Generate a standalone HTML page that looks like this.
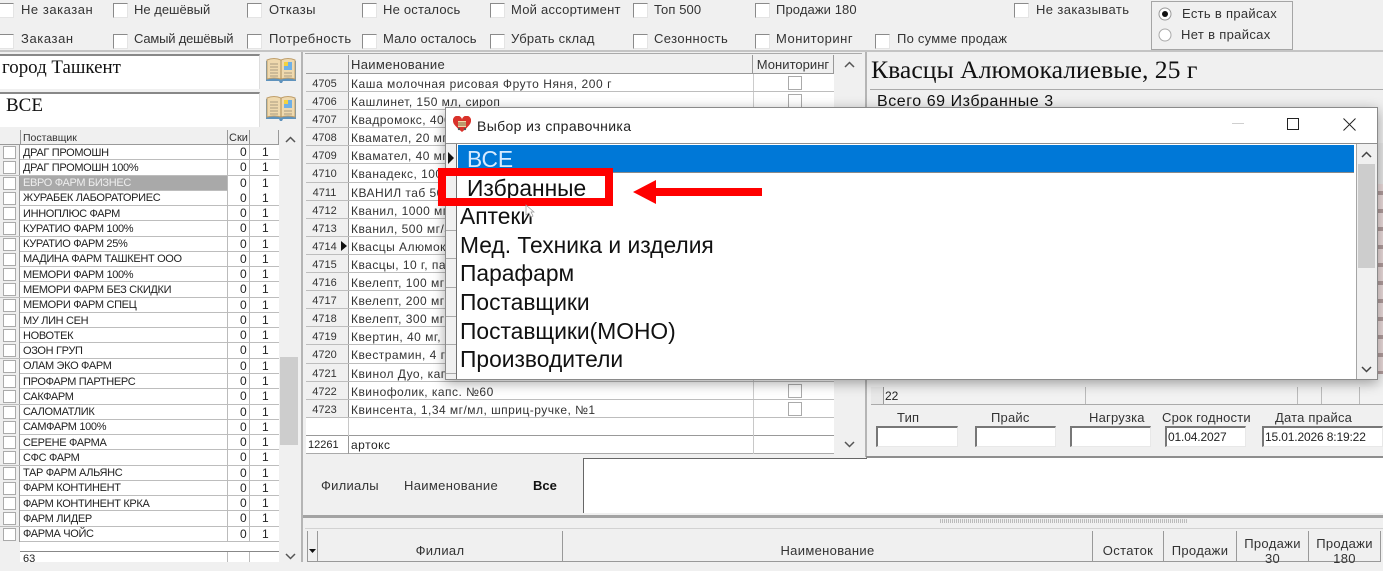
<!DOCTYPE html>
<html lang="ru"><head><meta charset="utf-8"><title>Выбор из справочника</title>
<style>
html,body{margin:0;padding:0;background:#f0f0f0}
body{position:relative;width:1383px;height:562px;overflow:hidden;font:12px "Liberation Sans",sans-serif;color:#222;filter:blur(.3px)}
.a{position:absolute;white-space:nowrap}
.cb{position:absolute;width:13px;height:13px;background:#fff;border:1px solid #8a8a8a;border-right-color:#e4e4e4;border-bottom-color:#e4e4e4;box-sizing:content-box}
.t{position:absolute;white-space:nowrap;line-height:14px;font-size:13px;color:#333}
.l{position:absolute;left:0;top:145px;width:279px}
.l div{height:15.28px;position:relative;box-sizing:border-box;border-bottom:1px solid #bdbdbd;background:#fff;line-height:15px;font-size:11px;letter-spacing:-.33px}
.l div.s{background:#a9a9a9;color:#eee}
.l i{position:absolute;left:0;top:0;width:20px;height:15px;background:#eee;border-right:1px solid #999;box-sizing:border-box}
.l i:after{content:"";position:absolute;left:3px;top:1px;width:11px;height:11px;background:#fff;border:1px solid #aaa}
.l b{font-weight:400;position:absolute;left:23px;top:.6px}
.l u,.l s{text-decoration:none;position:absolute;top:0;font-size:12px;letter-spacing:0}
.l u{left:240px}.l s{left:262px}
.l em{position:absolute;top:0;left:227px;width:1px;height:15px;background:#bbb}
.l em+em{left:249px}
.m{position:absolute;left:306px;top:74px;width:528px}
.m div{height:18.1px;position:relative;box-sizing:border-box;border-bottom:1px solid #bdbdbd;background:#fff;line-height:20px;letter-spacing:.47px;padding-left:45px;white-space:nowrap;overflow:hidden;color:#333}
.m i{position:absolute;left:0;top:0;width:43px;height:18px;background:#f0f0f0;border-right:1px solid #999;font-style:normal;font-size:11px;text-align:center;padding-right:5px;box-sizing:border-box;letter-spacing:0}
.m u{position:absolute;left:447px;top:0;width:1px;height:18px;background:#ccc}
.m div:after{content:"";position:absolute;left:482px;top:2px;width:12px;height:12px;border:1px solid #aaa;background:#fff}
.hd{position:absolute;background:#f0f0f0;color:#333;box-sizing:border-box;border-right:1px solid #999;border-bottom:1px solid #999;text-align:center;white-space:nowrap;font-size:13px;letter-spacing:.33px}
.fld{position:absolute;top:426px;height:21px;background:#fff;box-sizing:border-box;border:1px solid #e8e8e8;border-left:2px solid #777;border-top:2px solid #777;font-size:12px;line-height:18px;padding-left:1px;white-space:nowrap;letter-spacing:-.15px}
.lb{position:absolute;top:410px;line-height:15px;letter-spacing:.2px;font-size:13px;color:#333;white-space:nowrap}
.d{position:absolute;left:445px;top:107px;width:933px;height:273px;background:#fff;border:1px solid #8a8a8a;box-sizing:border-box;box-shadow:0 3px 12px rgba(0,0,0,.35)}
.dr{position:absolute;white-space:nowrap;font-size:22.8px;line-height:28px;color:#111;left:460px}
.dl{position:absolute;left:446px;width:10px;height:1px;background:#aaa}
</style></head><body>

<!-- top filter bar -->
<div class="cb" style="left:-1px;top:3px"></div><div class="t" style="left:21px;top:3px;letter-spacing:.54px">Не заказан</div>
<div class="cb" style="left:113px;top:3px"></div><div class="t" style="left:134px;top:3px">Не дешёвый</div>
<div class="cb" style="left:247px;top:3px"></div><div class="t" style="left:269px;top:3px;letter-spacing:.4px">Отказы</div>
<div class="cb" style="left:362px;top:3px"></div><div class="t" style="left:383px;top:3px;letter-spacing:.2px">Не осталось</div>
<div class="cb" style="left:490px;top:3px"></div><div class="t" style="left:511px;top:3px;letter-spacing:.24px">Мой ассортимент</div>
<div class="cb" style="left:633px;top:3px"></div><div class="t" style="left:654px;top:3px;letter-spacing:.1px">Топ 500</div>
<div class="cb" style="left:755px;top:3px"></div><div class="t" style="left:776px;top:3px;letter-spacing:.1px">Продажи 180</div>
<div class="cb" style="left:1014px;top:3px"></div><div class="t" style="left:1036px;top:3px;letter-spacing:.4px">Не заказывать</div>

<div class="cb" style="left:-1px;top:34px"></div><div class="t" style="left:21px;top:32px;letter-spacing:.6px">Заказан</div>
<div class="cb" style="left:113px;top:34px"></div><div class="t" style="left:134px;top:32px;letter-spacing:-.2px">Самый дешёвый</div>
<div class="cb" style="left:247px;top:34px"></div><div class="t" style="left:269px;top:32px;letter-spacing:.45px">Потребность</div>
<div class="cb" style="left:362px;top:34px"></div><div class="t" style="left:383px;top:32px;letter-spacing:.15px">Мало осталось</div>
<div class="cb" style="left:490px;top:34px"></div><div class="t" style="left:511px;top:32px;letter-spacing:.25px">Убрать склад</div>
<div class="cb" style="left:633px;top:34px"></div><div class="t" style="left:654px;top:32px;letter-spacing:.4px">Сезонность</div>
<div class="cb" style="left:755px;top:34px"></div><div class="t" style="left:776px;top:32px;letter-spacing:.5px">Мониторинг</div>
<div class="cb" style="left:875px;top:34px"></div><div class="t" style="left:897px;top:32px;letter-spacing:.25px">По сумме продаж</div>

<div class="a" style="left:1151px;top:1px;width:142px;height:49px;box-sizing:border-box;border:1px solid #a5a5a5"></div>
<svg class="a" style="left:1158px;top:7px" width="15" height="36"><circle cx="7" cy="7" r="6" fill="#fff" stroke="#999"/><circle cx="7" cy="7" r="3" fill="#111"/><circle cx="7" cy="28" r="6" fill="#fff" stroke="#aaa"/></svg>
<div class="t" style="left:1182px;top:7px;letter-spacing:.3px">Есть в прайсах</div>
<div class="t" style="left:1181px;top:28px;letter-spacing:.33px">Нет в прайсах</div>
<div class="a" style="left:0;top:50px;width:1383px;height:2px;background:#c4c4c4"></div>

<!-- left column -->
<div class="a" style="left:0;top:54px;width:260px;height:35px;background:#fff;border-top:2px solid #888;border-right:1px solid #ddd;box-sizing:border-box;font:18.9px/23px 'Liberation Serif',serif;color:#111;padding-left:2px">город Ташкент</div>
<div class="a" style="left:0;top:92px;width:260px;height:35px;background:#fff;border-top:2px solid #888;border-right:1px solid #ddd;box-sizing:border-box;font:19px/24px 'Liberation Serif',serif;color:#111;padding-left:6px">ВСЕ</div>
<svg class="a" style="left:265px;top:57px" width="32" height="27" viewBox="0 0 32 27"><path d="M1 4q8-3 15 0 7-3 15 0v20H18l-1 2h-2l-1-2H1z" fill="#5f93bd"/><path d="M2 3q7-3 14 0 7-3 14 0v19q-7-2-14 0-7-2-14 0z" fill="#efd9ae" stroke="#c09f6b"/><path d="M16 3v19" stroke="#a88a57"/><path d="M5 7h8M5 10h8M5 13h8M5 16h8M5 19h8M19 16h8M19 19h8" stroke="#a89a80"/><rect x="19" y="5" width="8" height="8" fill="#6fb0e6"/><rect x="19" y="5" width="4" height="4" fill="#f2d23f"/></svg>
<svg class="a" style="left:265px;top:95px" width="32" height="27" viewBox="0 0 32 27"><path d="M1 4q8-3 15 0 7-3 15 0v20H18l-1 2h-2l-1-2H1z" fill="#5f93bd"/><path d="M2 3q7-3 14 0 7-3 14 0v19q-7-2-14 0-7-2-14 0z" fill="#efd9ae" stroke="#c09f6b"/><path d="M16 3v19" stroke="#a88a57"/><path d="M5 7h8M5 10h8M5 13h8M5 16h8M5 19h8M19 16h8M19 19h8" stroke="#a89a80"/><rect x="19" y="5" width="8" height="8" fill="#6fb0e6"/><rect x="19" y="5" width="4" height="4" fill="#f2d23f"/></svg>

<div class="hd" style="left:0;top:130px;width:21px;height:15px"></div>
<div class="hd" style="left:21px;top:130px;width:207px;height:15px;text-align:left;padding-left:2px;font-size:10.5px;line-height:16px;letter-spacing:0">Поставщик</div>
<div class="hd" style="left:228px;top:130px;width:22px;height:15px;font-size:11px;line-height:16px;letter-spacing:0">Ски</div>
<div class="hd" style="left:250px;top:130px;width:29px;height:15px"></div>

<div class="l">
<div><i></i><b>ДРАГ ПРОМОШН</b><em></em><em></em><u>0</u><s>1</s></div>
<div><i></i><b>ДРАГ ПРОМОШН 100%</b><em></em><em></em><u>0</u><s>1</s></div>
<div class="s"><i></i><b>ЕВРО ФАРМ БИЗНЕС</b><em></em><em></em><u style="background:#fff;color:#222;left:228px;width:21px;padding-left:12px;box-sizing:border-box">0</u><s style="background:#fff;color:#222;left:250px;width:29px;padding-left:12px;box-sizing:border-box">1</s></div>
<div><i></i><b>ЖУРАБЕК ЛАБОРАТОРИЕС</b><em></em><em></em><u>0</u><s>1</s></div>
<div><i></i><b>ИННОПЛЮС ФАРМ</b><em></em><em></em><u>0</u><s>1</s></div>
<div><i></i><b>КУРАТИО ФАРМ 100%</b><em></em><em></em><u>0</u><s>1</s></div>
<div><i></i><b>КУРАТИО ФАРМ 25%</b><em></em><em></em><u>0</u><s>1</s></div>
<div><i></i><b>МАДИНА ФАРМ ТАШКЕНТ ООО</b><em></em><em></em><u>0</u><s>1</s></div>
<div><i></i><b>МЕМОРИ ФАРМ 100%</b><em></em><em></em><u>0</u><s>1</s></div>
<div><i></i><b>МЕМОРИ ФАРМ БЕЗ СКИДКИ</b><em></em><em></em><u>0</u><s>1</s></div>
<div><i></i><b>МЕМОРИ ФАРМ СПЕЦ</b><em></em><em></em><u>0</u><s>1</s></div>
<div><i></i><b>МУ ЛИН СЕН</b><em></em><em></em><u>0</u><s>1</s></div>
<div><i></i><b>НОВОТЕК</b><em></em><em></em><u>0</u><s>1</s></div>
<div><i></i><b>ОЗОН ГРУП</b><em></em><em></em><u>0</u><s>1</s></div>
<div><i></i><b>ОЛАМ ЭКО ФАРМ</b><em></em><em></em><u>0</u><s>1</s></div>
<div><i></i><b>ПРОФАРМ ПАРТНЕРС</b><em></em><em></em><u>0</u><s>1</s></div>
<div><i></i><b>САКФАРМ</b><em></em><em></em><u>0</u><s>1</s></div>
<div><i></i><b>САЛОМАТЛИК</b><em></em><em></em><u>0</u><s>1</s></div>
<div><i></i><b>САМФАРМ 100%</b><em></em><em></em><u>0</u><s>1</s></div>
<div><i></i><b>СЕРЕНЕ ФАРМА</b><em></em><em></em><u>0</u><s>1</s></div>
<div><i></i><b>СФС ФАРМ</b><em></em><em></em><u>0</u><s>1</s></div>
<div><i></i><b>ТАР ФАРМ АЛЬЯНС</b><em></em><em></em><u>0</u><s>1</s></div>
<div><i></i><b>ФАРМ КОНТИНЕНТ</b><em></em><em></em><u>0</u><s>1</s></div>
<div><i></i><b>ФАРМ КОНТИНЕНТ КРКА</b><em></em><em></em><u>0</u><s>1</s></div>
<div><i></i><b>ФАРМ ЛИДЕР</b><em></em><em></em><u>0</u><s>1</s></div>
<div><i></i><b>ФАРМА ЧОЙС</b><em></em><em></em><u>0</u><s>1</s></div>
</div>
<div class="a" style="left:20px;top:542px;width:259px;height:9px;background:#fff;border-bottom:1px solid #888"></div>
<div class="a" style="left:0;top:552px;width:279px;height:10px;background:#fff"></div>
<div class="a" style="left:0;top:552px;width:20px;height:10px;background:#f0f0f0"></div>
<div class="a" style="left:23px;top:553px;font-size:11px;line-height:13px">63</div>
<div class="a" style="left:227px;top:552px;width:1px;height:10px;background:#bbb"></div>
<div class="a" style="left:249px;top:552px;width:1px;height:10px;background:#bbb"></div>
<div class="a" style="left:280px;top:130px;width:18px;height:432px;background:#f0f0f0"></div>
<div class="a" style="left:280px;top:357px;width:18px;height:88px;background:#cdcdcd"></div>
<svg class="a" style="left:285px;top:136px" width="11" height="7"><path d="M1 6l4.500-4.500L10 6" fill="none" stroke="#555" stroke-width="1.500"/></svg>
<svg class="a" style="left:285px;top:553px" width="11" height="7"><path d="M1 1l4.500 4.500L10 1" fill="none" stroke="#555" stroke-width="1.500"/></svg>
<div class="a" style="left:301px;top:52px;width:2px;height:510px;background:#b5b5b5"></div>

<!-- middle grid -->
<div class="a" style="left:305px;top:53px;width:557px;height:1px;background:#aaa"></div>
<div class="hd" style="left:306px;top:55px;width:43px;height:19px"></div>
<div class="hd" style="left:349px;top:55px;width:404px;height:19px;text-align:left;padding-left:2px;line-height:19px">Наименование</div>
<div class="hd" style="left:753px;top:55px;width:81px;height:19px;line-height:19px;letter-spacing:.03px">Мониторинг</div>
<div class="m">
<div style="letter-spacing:.55px"><i>4705</i>Каша молочная рисовая Фруто Няня, 200 г<u></u></div>
<div><i>4706</i>Кашлинет, 150 мл, сироп<u></u></div>
<div><i>4707</i>Квадромокс, 400 мг<u></u></div>
<div><i>4708</i>Квамател, 20 мг<u></u></div>
<div><i>4709</i>Квамател, 40 мг<u></u></div>
<div><i>4710</i>Кванадекс, 100 мг<u></u></div>
<div><i>4711</i>КВАНИЛ таб 500 мг<u></u></div>
<div><i>4712</i>Кванил, 1000 мг<u></u></div>
<div><i>4713</i>Кванил, 500 мг/5 мл<u></u></div>
<div><i>4714</i>Квасцы Алюмокалиевые<u></u></div>
<div><i>4715</i>Квасцы, 10 г, пакет<u></u></div>
<div><i>4716</i>Квелепт, 100 мг<u></u></div>
<div><i>4717</i>Квелепт, 200 мг<u></u></div>
<div><i>4718</i>Квелепт, 300 мг<u></u></div>
<div><i>4719</i>Квертин, 40 мг, таб<u></u></div>
<div><i>4720</i>Квестрамин, 4 г<u></u></div>
<div><i>4721</i>Квинол Дуо, капс<u></u></div>
<div><i>4722</i>Квинофолик, капс. №60<u></u></div>
<div><i>4723</i>Квинсента, 1,34 мг/мл, шприц-ручке, №1<u></u></div>
</div>
<svg class="a" style="left:340px;top:240px" width="8" height="12"><path d="M1 1l6 5-6 5z" fill="#111"/></svg>
<div class="a" style="left:306px;top:418px;width:528px;height:18px;background:#fff;border-bottom:1px solid #999;box-sizing:border-box"></div>
<div class="a" style="left:348px;top:418px;width:1px;height:36px;background:#c8c8c8"></div>
<div class="a" style="left:753px;top:418px;width:1px;height:36px;background:#c8c8c8"></div>
<div class="a" style="left:306px;top:436px;width:528px;height:18px;background:#fff;border-bottom:1px solid #aaa;box-sizing:border-box"></div>
<div class="a" style="left:308px;top:437px;font-size:11px;line-height:16px">12261</div>
<div class="a" style="left:348px;top:436px;width:1px;height:18px;background:#999"></div>
<div class="a" style="left:753px;top:436px;width:1px;height:18px;background:#c8c8c8"></div>
<div class="a" style="left:351px;top:437px;line-height:16px;letter-spacing:.5px">артокс</div>
<svg class="a" style="left:844px;top:441px" width="11" height="7"><path d="M1 1l4.500 4.500L10 1" fill="none" stroke="#555" stroke-width="1.500"/></svg>
<svg class="a" style="left:844px;top:61px" width="11" height="7"><path d="M1 6l4.500-4.500L10 6" fill="none" stroke="#555" stroke-width="1.500"/></svg>
<div class="a" style="left:865px;top:52px;width:2px;height:405px;background:#b5b5b5"></div>

<!-- filial search -->
<div class="t" style="left:321px;top:479px;letter-spacing:.25px">Филиалы</div>
<div class="t" style="left:404px;top:479px;letter-spacing:.33px">Наименование</div>
<div class="t" style="left:533px;top:479px;font-weight:700;color:#111">Все</div>
<div class="a" style="left:583px;top:458px;width:800px;height:55px;background:#fff;border-left:1px solid #666;border-top:1px solid #666;box-sizing:border-box"></div>
<div class="a" style="left:303px;top:515px;width:1080px;height:3px;background:#a3a3a3"></div>
<div class="a" style="left:940px;top:519px;width:247px;height:4px;background:repeating-linear-gradient(90deg,#bbb 0 1px,transparent 1px 2px)"></div>
<div class="a" style="left:305px;top:528px;width:1078px;height:1px;background:#d2d2d2"></div>
<div class="hd" style="left:307px;top:531px;width:11px;height:31px;border-left:1px solid #999"></div>
<svg class="a" style="left:309px;top:549px" width="8" height="5"><path d="M0 0h7L3.500 4z" fill="#111"/></svg>
<div class="hd" style="left:318px;top:531px;width:245px;height:31px;line-height:40px">Филиал</div>
<div class="hd" style="left:563px;top:531px;width:530px;height:31px;line-height:40px">Наименование</div>
<div class="hd" style="left:1093px;top:531px;width:71px;height:31px;line-height:40px">Остаток</div>
<div class="hd" style="left:1164px;top:531px;width:73px;height:31px;line-height:40px">Продажи</div>
<div class="hd" style="left:1237px;top:531px;width:72px;height:31px;line-height:15px;padding-top:5px">Продажи<br>30</div>
<div class="hd" style="left:1309px;top:531px;width:72px;height:31px;line-height:15px;padding-top:5px">Продажи<br>180</div>

<!-- right panel -->
<div class="a" style="left:871px;top:55px;font:25.7px/30px 'Liberation Serif',serif;color:#111">Квасцы Алюмокалиевые, 25 г</div>
<div class="a" style="left:870px;top:89px;width:513px;height:1px;background:#aaa"></div>
<div class="a" style="left:877px;top:93px;font-size:16px;line-height:18px;color:#111;letter-spacing:.55px">Всего 69 Избранные 3</div>
<div class="a" style="left:871px;top:387px;width:512px;height:18px;background:#f2f2f2;border-bottom:1px solid #aaa;box-sizing:border-box"></div>
<div class="a" style="left:871px;top:387px;width:12px;height:17px;background:#e8e8e8;border-right:1px solid #999"></div>
<div class="a" style="left:885px;top:389px;line-height:14px">22</div>
<div class="a" style="left:1085px;top:387px;width:1px;height:17px;background:#bbb"></div>
<div class="a" style="left:1297px;top:387px;width:1px;height:17px;background:#bbb"></div>
<div class="a" style="left:1321px;top:387px;width:1px;height:17px;background:#bbb"></div>
<div class="a" style="left:1359px;top:387px;width:1px;height:17px;background:#bbb"></div>
<div class="lb" style="left:897px">Тип</div>
<div class="lb" style="left:991px">Прайс</div>
<div class="lb" style="left:1089px">Нагрузка</div>
<div class="lb" style="left:1162px">Срок годности</div>
<div class="lb" style="left:1275px">Дата прайса</div>
<div class="fld" style="left:876px;width:82px"></div>
<div class="fld" style="left:975px;width:81px"></div>
<div class="fld" style="left:1070px;width:81px"></div>
<div class="fld" style="left:1165px;width:81px">01.04.2027</div>
<div class="fld" style="left:1262px;width:121px">15.01.2026 8:19:22</div>
<div class="a" style="left:866px;top:456px;width:517px;height:2px;background:#8e8e8e"></div>
<div class="a" style="left:867px;top:458px;width:516px;height:55px;background:#fff"></div>
<div class="a" style="left:1378px;top:184px;width:5px;height:190px;background:repeating-linear-gradient(180deg,#eadbdb 0 7px,#b09c9c 7px 11px,#eadbdb 11px 18px)"></div>
<div class="a" style="left:1378px;top:143px;width:5px;height:41px;background:#e8e8e8"></div>

<!-- dialog -->
<div class="d"></div>
<svg class="a" style="left:453px;top:116px" width="18" height="17" viewBox="0 0 18 17"><path d="M9 16C3 11 0 8 0 5a4.500 4.500 0 0 1 9-1.500A4.500 4.500 0 0 1 18 5c0 3-3 6-9 11z" fill="#d9322a"/><rect x="5" y="5" width="8" height="6" fill="#f0d8a8"/><path d="M5 7h8M5 9h8" stroke="#8a5a30"/><circle cx="6" cy="13" r="1.200" fill="#555"/><circle cx="12" cy="13" r="1.200" fill="#555"/></svg>
<div class="a" style="left:477px;top:118px;font-size:14px;line-height:16px;color:#222;letter-spacing:.37px">Выбор из справочника</div>
<div class="a" style="left:1232px;top:123px;width:12px;height:1px;background:#cfcfcf"></div>
<div class="a" style="left:1287px;top:118px;width:12px;height:12px;border:1px solid #222;box-sizing:border-box"></div>
<svg class="a" style="left:1343px;top:118px" width="13" height="13"><path d="M.5.500l12 12M12.500.500l-12 12" stroke="#222" fill="none"/></svg>
<div class="a" style="left:446px;top:143px;width:931px;height:1px;background:#8f8f8f"></div>
<div class="a" style="left:446px;top:144px;width:10px;height:235px;background:#f0f0f0"></div>
<div class="a" style="left:456px;top:144px;width:1px;height:235px;background:#6f6f6f"></div>
<div class="dl" style="top:172px"></div><div class="dl" style="top:201px"></div><div class="dl" style="top:230px"></div><div class="dl" style="top:258px"></div><div class="dl" style="top:287px"></div><div class="dl" style="top:316px"></div><div class="dl" style="top:344px"></div><div class="dl" style="top:373px"></div>
<svg class="a" style="left:448px;top:152px" width="7" height="12"><path d="M0 0l6 6-6 6z" fill="#111"/></svg>
<div class="a" style="left:458px;top:145px;width:896px;height:28px;background:#0078d7;border-bottom:1px solid #8a8a8a;box-sizing:border-box"></div>
<div class="dr" style="left:467px;top:145px;color:#d6ebff">ВСЕ</div>
<div class="dr" style="left:467px;top:174px">Избранные</div>
<div class="dr" style="top:202px">Аптеки</div>
<div class="dr" style="top:231px">Мед. Техника и изделия</div>
<div class="dr" style="top:259px">Парафарм</div>
<div class="dr" style="top:288px">Поставщики</div>
<div class="dr" style="top:317px">Поставщики(МОНО)</div>
<div class="dr" style="top:345px">Производители</div>
<div class="a" style="left:1356px;top:144px;width:1px;height:235px;background:#a5a5a5"></div>
<div class="a" style="left:1357px;top:144px;width:20px;height:235px;background:#f0f0f0"></div>
<div class="a" style="left:1358px;top:164px;width:17px;height:104px;background:#cdcdcd"></div>
<svg class="a" style="left:1361px;top:151px" width="11" height="7"><path d="M1 6l4.500-4.500L10 6" fill="none" stroke="#444" stroke-width="1.500"/></svg>
<svg class="a" style="left:1361px;top:366px" width="11" height="7"><path d="M1 1l4.500 4.500L10 1" fill="none" stroke="#444" stroke-width="1.500"/></svg>

<!-- annotation -->
<div class="a" style="left:438px;top:168px;width:175px;height:38px;border:8px solid #f00;box-sizing:border-box"></div>
<svg class="a" style="left:630px;top:178px" width="134" height="28"><path d="M3 14L26 2v8h106v8H26v8z" fill="#f00"/></svg>
<svg class="a" style="left:525px;top:204px" width="12" height="14"><path d="M1 1v10l3-2 2 4 2-1-2-4h3z" fill="#fff" stroke="#999" stroke-width=".7"/></svg>
</body></html>
